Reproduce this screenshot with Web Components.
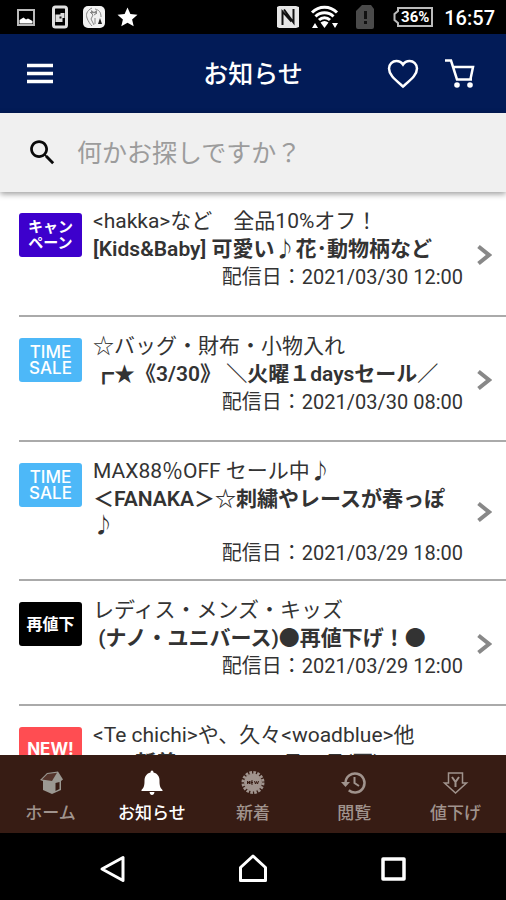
<!DOCTYPE html>
<html lang="ja">
<head>
<meta charset="utf-8">
<meta name="viewport" content="width=device-width, initial-scale=1">
<title>お知らせ</title>
<style>
  html, body { margin: 0; height: 100%; }
  body { font-family: Roboto, "Noto Sans CJK JP", sans-serif; background: #fff; color: #333; }
</style>
</head>
<body>
<news-app></news-app>
<script>
const define = (name, html) => {
  const template = document.createElement('template');
  template.innerHTML = html;
  customElements.define(name, class extends HTMLElement {
    constructor() {
      super();
      this.attachShadow({ mode: 'open' }).append(template.content.cloneNode(true));
    }
  });
};

define('status-bar', `
<style>
  :host { display: flex; align-items: center; justify-content: space-between; height: 34px; padding: 0 11px 0 15px; background: #000; color: #fff; box-sizing: border-box; }
  div { display: flex; align-items: center; }
  .left { gap: 12px; }
  .right { gap: 10px; }
  svg { display: block; }
  .battery { display: grid; place-items: center; }
  .battery > * { grid-area: 1 / 1; }
  .battery span { font-size: 15px; font-weight: 700; line-height: 20px; padding-left: 4px; }
  time { font-size: 20px; font-weight: 500; line-height: 24px; padding-top: 2px; }
</style>
<div class="left">
  <svg width="22" height="24" viewBox="0 0 22 24"><rect x="3" y="5" width="16" height="15" fill="none" stroke="#bbb" stroke-width="2"/><path d="M4.500 18.500v-3.500l4-2.500 2.500 2 2-1 4.500 2.500v2.500z" fill="#fff"/></svg>
  <svg width="22" height="24" viewBox="0 0 22 24"><rect x="4.500" y="2" width="13" height="20" rx="2" fill="none" stroke="#e0e0e0" stroke-width="3"/><path d="M6.500 9.500h5V8h4v5h-2v4h-7z" fill="#ddd"/><path d="M10.500 11.500h2v2h-2z" fill="#222"/></svg>
  <svg width="22" height="24" viewBox="0 0 22 24"><rect x="0" y="1" width="22" height="22" rx="5" fill="#f2f2f2"/><path d="M9 3C3 6 3 10 4 13s3 6 5 8M12 4c4 1 6 3 6 8M7 7l3 3-2 4 3 6M11 10l3-2M12 13v6" fill="none" stroke="#888" stroke-width="1"/><path d="M8 5l3 2 3-2v4l-3-1-3 1z" fill="#888"/><path d="M17 13l2 6h-4z" fill="#222"/></svg>
  <svg width="22" height="24" viewBox="0 0 22 24"><path d="M10.500 2.500l2.900 6.500 7.100.700-5.400 4.700 1.600 6.900-6.200-3.600-6.200 3.600 1.600-6.900L.5 9.700l7.100-.7z" fill="#fff"/></svg>
</div>
<div class="right">
  <svg width="24" height="24" viewBox="0 0 24 24"><path d="M1 2l2-1h17l3 1v20l-3 1H3l-2-1z" fill="#e6e6e6"/><path d="M6.500 20V6.500l9 10M8 4.500l9.500 13V4" fill="none" stroke="#111" stroke-width="2"/></svg>
  <svg width="30" height="26" viewBox="0 0 30 26"><path d="M2 8.500c7-7 18-7 25 0M5.500 12.500c5-5 13-5 18 0M9 16c3-3 8-3 11 0" fill="none" stroke="#fff" stroke-width="3"/><path d="M10.500 18.500c2.500-2 5.500-2 8 0l-4 5.500z" fill="#fff"/><path d="M2 24l3-5 3 5zM22 19h6l-3 5z" fill="#fff"/></svg>
  <svg width="32" height="26" viewBox="0 0 32 26"><path d="M12 1h9l3 4v18q0 2-2 2H8q-2 0-2-2V7z" fill="#4a4a4a"/><path d="M14 7h3v8h-3zM14 17h3v3h-3z" fill="#111"/></svg>
  <div class="battery">
    <svg width="42" height="22" viewBox="0 0 42 22"><path d="M6 2h34v18H6v-3L2.500 14V8L6 5z" fill="none" stroke="#bbb" stroke-width="2"/></svg>
    <span>36%</span>
  </div>
  <time>16:57</time>
</div>`);

define('app-header', `
<style>
  :host { display: grid; grid-template-columns: 1fr auto 1fr; align-items: center; height: 79px; padding: 0 26px; background: #021b57; color: #fff; box-sizing: border-box; }
  h1 { margin: 0; padding-top: 2px; font-size: 25px; font-weight: 500; line-height: 36px; }
  button { display: block; border: 0; padding: 0; background: none; color: inherit; }
  svg { display: block; }
  .actions { display: flex; justify-content: flex-end; gap: 23px; }
</style>
<button aria-label="メニュー"><svg width="36" height="36" viewBox="4 0 36 36"><path d="M5 9.500h26M5 17.500h26M5 25.500h26" stroke="#fff" stroke-width="3.500"/></svg></button>
<h1><slot></slot></h1>
<div class="actions">
  <button aria-label="お気に入り"><svg width="36" height="36" viewBox="0 0 36 36"><path d="M18 30.500C10 23.500 4 19 4 12.500 4 8 7.500 5 11.400 5c2.700 0 5.100 1.200 6.600 3.500C19.500 6.200 21.900 5 24.600 5c3.900 0 7.400 3 7.400 7.500 0 6.500-6 11-14 18z" fill="none" stroke="#fff" stroke-width="2.500"/></svg></button>
  <button aria-label="カート"><svg width="36" height="36" viewBox="0 0 36 36"><path d="M1 4.500h6l6 19h15M8.500 11h20.500l-2.500 12" fill="none" stroke="#fff" stroke-width="2.500"/><circle cx="13" cy="29" r="2.800" fill="#fff"/><circle cx="26" cy="29" r="2.800" fill="#fff"/></svg></button>
</div>`);

define('search-box', `
<style>
  :host { display: block; position: relative; background: #f0f0f0; box-shadow: 0 2px 6px rgba(0,0,0,.4); }
  label { display: flex; align-items: center; gap: 18px; height: 79px; padding: 0 26px; }
  svg { display: block; flex: none; }
  input { flex: 1; min-width: 0; border: 0; padding: 2px 0 0; outline: 0; background: none; color: #333; font-family: inherit; font-size: 25px; line-height: 36px; height: 36px; }
  input::placeholder { color: #9c9c9c; opacity: 1; }
</style>
<label>
  <svg width="33" height="33" viewBox="0 0 24 24" aria-hidden="true"><path d="M15.500 14h-.790l-.280-.270C15.410 12.590 16 11.110 16 9.500 16 5.910 13.090 3 9.500 3S3 5.910 3 9.500 5.910 16 9.500 16c1.610 0 3.090-.590 4.230-1.570l.270.280v.790l5 4.990L20.490 19l-4.990-5zm-6 0C7.010 14 5 11.990 5 9.500S7.010 5 9.500 5 14 7.010 14 9.500 11.990 14 9.500 14z" fill="#0a0a0a"/></svg>
  <input type="search" placeholder="何かお探しですか？" aria-label="検索">
</label>`);

define('news-badge', `
<style>
  :host { display: grid; place-items: center; align-content: center; width: 63px; height: 44px; border-radius: 3px; background: #000; color: #fff; font: 500 17px/16px Inter, "Noto Sans CJK JP", sans-serif; text-align: center; }
  :host([kind="campaign"]) { background: #3d00cc; font-size: 15px; font-weight: 700; }
  :host([kind="sale"]) { background: #4db8f8; }
  :host([kind="again"]) { font-size: 16px; font-weight: 700; }
  :host([kind="new"]) { background: #ff4d52; font-weight: 700; }
</style>
<span><slot></slot></span>`);

define('news-item', `
<style>
  :host { display: block; margin-left: 19px; border-bottom: 2px solid #aaa; }
  a { display: flex; align-items: center; min-height: 123px; padding: 15px 14px 12px 0; box-sizing: border-box; color: inherit; text-decoration: none; }
  .badge { align-self: flex-start; padding-top: 6px; }
  .text { flex: 1; min-width: 0; align-self: flex-start; padding: 0 14px 0 11px; }
  p, h2, time { display: block; margin: 0; }
  p { font-size: 21px; line-height: 28px; font-weight: 400; }
  h2 { padding: 1px 0; font-size: 21px; line-height: 26px; font-weight: 600; }
  time { font-size: 20px; line-height: 28px; font-weight: 400; text-align: right; }
  svg { display: block; flex: none; }
</style>
<a href="#">
  <div class="badge"><slot name="badge"></slot></div>
  <div class="text">
    <p><slot name="lead"></slot></p>
    <h2><slot></slot></h2>
    <time><slot name="date"></slot></time>
  </div>
  <svg width="15" height="22" viewBox="0 0 15 22" aria-hidden="true"><path d="M1.500 2.500l10.500 8.500-10.500 8.500" fill="none" stroke="#888" stroke-width="4"/></svg>
</a>`);

define('tab-item', `
<style>
  :host { display: block; flex: 1 1 0; min-width: 0; color: #a0938d; }
  :host([active]) { color: #fff; }
  a { display: grid; justify-items: center; gap: 3px; padding: 11px 0 8px; color: inherit; text-decoration: none; font-size: 17px; font-weight: 500; line-height: 24px; }
  ::slotted(svg) { display: block; }
</style>
<a href="#"><slot name="icon"></slot><span><slot></slot></span></a>`);

define('tab-bar', `
<style>
  :host { display: flex; position: relative; height: 78px; background: #371c14; box-sizing: border-box; }
</style>
<slot></slot>`);

define('system-nav', `
<style>
  :host { display: flex; align-items: center; height: 67px; padding: 0 43px; background: #000; }
  button { flex: 1; display: grid; place-items: center; border: 0; padding: 4px 0 0; background: none; }
  svg { display: block; }
</style>
<button aria-label="戻る"><svg width="30" height="32" viewBox="0 0 30 32"><path d="M25 4.500v23L4 16z" fill="none" stroke="#fff" stroke-width="3" stroke-linejoin="round"/></svg></button>
<button aria-label="ホーム"><svg width="30" height="32" viewBox="0 0 30 32"><path d="M2.500 27.500V14.500L15 3l12.500 11.500v13z" fill="none" stroke="#fff" stroke-width="3" stroke-linejoin="round"/></svg></button>
<button aria-label="履歴"><svg width="30" height="32" viewBox="0 0 30 32"><rect x="5" y="6" width="21" height="20" fill="none" stroke="#fff" stroke-width="3.500" stroke-linejoin="round"/></svg></button>`);

define('news-app', `
<style>
  :host { display: flex; flex-direction: column; height: 100vh; overflow: hidden; }
  status-bar, app-header, search-box, tab-bar, system-nav { flex: none; }
  search-box { z-index: 1; }
  main { flex: 1; min-height: 0; overflow: hidden; }
</style>
<status-bar></status-bar>
<app-header>お知らせ</app-header>
<search-box></search-box>
<main>
  <news-item>
    <news-badge slot="badge" kind="campaign">キャン<br>ペーン</news-badge>
    <span slot="lead">&lt;hakka&gt;など　全品10%オフ！</span>
    [Kids&amp;Baby] 可愛い♪花･動物柄など
    <span slot="date">配信日：2021/03/30 12:00</span>
  </news-item>
  <news-item>
    <news-badge slot="badge" kind="sale">TIME<br>SALE</news-badge>
    <span slot="lead">☆バッグ・財布・小物入れ</span>
    ┏★《3/30》 ＼火曜１daysセール／
    <span slot="date">配信日：2021/03/30 08:00</span>
  </news-item>
  <news-item>
    <news-badge slot="badge" kind="sale">TIME<br>SALE</news-badge>
    <span slot="lead">MAX88％OFF セール中♪</span>
    ＜FANAKA＞☆刺繍やレースが春っぽ♪
    <span slot="date">配信日：2021/03/29 18:00</span>
  </news-item>
  <news-item>
    <news-badge slot="badge" kind="again">再値下</news-badge>
    <span slot="lead">レディス・メンズ・キッズ</span>
    &nbsp;(ナノ・ユニバース)●再値下げ！●
    <span slot="date">配信日：2021/03/29 12:00</span>
  </news-item>
  <news-item>
    <news-badge slot="badge" kind="new">NEW!</news-badge>
    <span slot="lead">&lt;Te chichi&gt;や、久々&lt;woadblue&gt;他</span>
    　　新着・・・・・ラ・ラ(再)
    <span slot="date">配信日：2021/03/29 08:00</span>
  </news-item>
</main>
<tab-bar>
  <tab-item>
    <svg slot="icon" width="30" height="32" viewBox="0 0 30 32"><path d="M4 14l7-7 11-1.500 5 8-2 1.500v9l-9 4-9-4v-9z" fill="#9b9892"/><path d="M6 13.500l5.500-5.500 9.500-1.300-5 8.300z" fill="#54342b"/><path d="M19.500 17l4-1v7l-4 2z" fill="#371c14"/></svg>
    ホーム
  </tab-item>
  <tab-item active>
    <svg slot="icon" width="30" height="32" viewBox="0 0 30 32"><path d="M13.500 6.500q0-2 1.500-2t1.500 2c4 1 6 4 6 8 0 5 .5 7 3 9.500v1h-21v-1c2.500-2.500 3-4.500 3-9.500 0-4 2-7 6-8zM12.500 26h5q-.5 3-2.500 3t-2.500-3z" fill="#fff"/></svg>
    お知らせ
  </tab-item>
  <tab-item>
    <svg slot="icon" width="30" height="32" viewBox="0 0 30 32"><circle cx="15" cy="16.500" r="9" fill="#a0938d"/><circle cx="15" cy="16.500" r="10" fill="none" stroke="#a0938d" stroke-width="3" stroke-dasharray="2.600 1.330"/><path d="M9.500 18v-3l2 3v-3M15 15h-2v3h2M13 16.500h2M16.500 15l1 3 1-2.500 1 2.500 1-3" fill="none" stroke="#371c14" stroke-width="1"/></svg>
    新着
  </tab-item>
  <tab-item>
    <svg slot="icon" width="30" height="32" viewBox="0 0 30 32"><path d="M6.500 17a9.500 9.500 0 1 1 3.300 7.200" fill="none" stroke="#a0938d" stroke-width="2.500"/><path d="M2 16h9l-4.500 5z" fill="#a0938d"/><path d="M15.500 11v6l4.500 3" fill="none" stroke="#a0938d" stroke-width="2"/></svg>
    閲覧
  </tab-item>
  <tab-item>
    <svg slot="icon" width="30" height="32" viewBox="0 0 30 32"><path d="M8.500 7h14v10h4l-11 10-11-10h4z" fill="none" stroke="#a0938d" stroke-width="1.500"/><path d="M12 11l3.500 5 3.500-5M15.500 16v5" fill="none" stroke="#a0938d" stroke-width="2"/></svg>
    値下げ
  </tab-item>
</tab-bar>
<system-nav></system-nav>`);
</script>
</body>
</html>
